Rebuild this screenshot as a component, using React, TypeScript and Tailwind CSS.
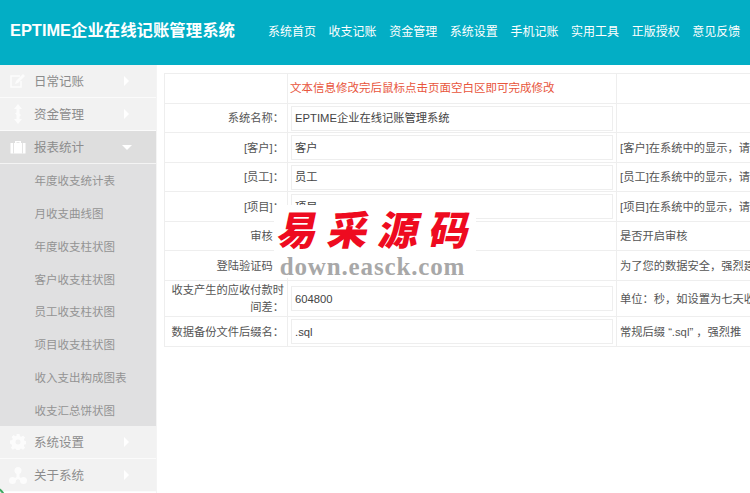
const FONT = "font-['Liberation_Sans','Noto_Sans_CJK_SC',sans-serif]";
const nav = ["系统首页", "收支记账", "资金管理", "系统设置", "手机记账", "实用工具", "正版授权", "意见反馈"];
const sub = ["年度收支统计表", "月收支曲线图", "年度收支柱状图", "客户收支柱状图", "员工收支柱状图", "项目收支柱状图", "收入支出构成图表", "收支汇总饼状图"];

function Caret() {
  return <span className="ml-auto mr-[27px] h-0 w-0 border-y-[5px] border-l-[5px] border-y-transparent border-l-white" />;
}

function PenIcon() {
  return (
    <svg width="18" height="16" viewBox="0 0 18 16" fill="none">
      <path d="M11 3H2v11h10V8" stroke="white" strokeWidth="1.6" />
      <path d="M6 11l1-3 7-7 2 2-7 7z" fill="white" />
    </svg>
  );
}
function ArrowIcon() {
  return (
    <svg width="10" height="20" viewBox="0 0 10 20" fill="white">
      <path d="M5 0l4 5H6.500v4.500L8 11l-1.500 1.500V15H9l-4 5-4-5h2.500V11L2 9.500l1.500-1V5H1z" />
    </svg>
  );
}
function CaseIcon() {
  return (
    <svg width="16" height="14" viewBox="0 0 16 14" fill="white">
      <path d="M5 3V1h6v2h4.500v10.500H.5V3zm1.500 0h3V2.200h-3z" fillRule="evenodd" />
      <path d="M3 3h1v10.500H3zM12 3h1v10.500h-1z" fill="#e4e4e4" />
    </svg>
  );
}
function GearIcon() {
  return (
    <svg width="16" height="16" viewBox="0 0 16 16" fill="white">
      <path
        fillRule="evenodd"
        d="M6.500 0h3l.4 2.200 1.300.6 1.900-1.300 2 2-1.300 1.900.6 1.300 2.200.4v3l-2.200.4-.6 1.300 1.300 1.900-2 2-1.900-1.300-1.300.6-.4 2.200h-3l-.4-2.200-1.300-.6-1.900 1.300-2-2 1.300-1.900-.6-1.300L0 9.500v-3l2.200-.4.6-1.300L1.500 2.900l2-2 1.900 1.300 1.300-.6zM8 5.500a2.500 2.500 0 100 5 2.500 2.500 0 000-5z"
      />
    </svg>
  );
}
function NodesIcon() {
  return (
    <svg width="18" height="17" viewBox="0 0 18 17" fill="white">
      <circle cx="9" cy="3.500" r="3.500" />
      <circle cx="3.500" cy="13.500" r="3.500" />
      <circle cx="14.500" cy="13.500" r="3.500" />
      <path d="M7.500 5h3v5l3 2-1.500 2-3-2-3 2-1.500-2 3-2z" />
    </svg>
  );
}

function MenuItem({ icon, label }: { icon: React.ReactNode; label: string }) {
  return (
    <div className="flex h-[33px] items-center border-b border-[#fbfbfb] bg-[#f2f2f2] text-[12.500px] text-[#8c8c8c]">
      <span className="flex w-[34px] justify-center pl-[1px] opacity-80">{icon}</span>
      <span className="pt-[2px]">{label}</span>
      <Caret />
    </div>
  );
}

const rows = [
  { h: "h-[29px]", label: "系统名称：", value: "EPTIME企业在线记账管理系统", note: "" },
  { h: "h-[30px]", label: "[客户]：", value: "客户", note: "[客户]在系统中的显示，请" },
  { h: "h-[29px]", label: "[员工]：", value: "员工", note: "[员工]在系统中的显示，请" },
  { h: "h-[30px]", label: "[项目]：", value: "项目", note: "[项目]在系统中的显示，请" },
  { h: "h-[29px]", label: "审核：", value: "", note: "是否开启审核" },
  { h: "h-[30px]", label: "登陆验证码：", value: "", note: "为了您的数据安全，强烈建" },
  { h: "h-[36px]", label: "收支产生的应收付款时间差：", value: "604800", note: "单位：秒，如设置为七天收" },
  { h: "h-[30px]", label: "数据备份文件后缀名：", value: ".sql", note: "常规后缀 “.sql” ，强烈推" },
];

export default function App() {
  return (
    <div className={`relative flex h-[493px] w-[750px] flex-col overflow-hidden bg-white ${FONT}`}>
      <header className="flex h-[65px] shrink-0 items-center bg-[#03aec5] text-white">
        <div className="-mt-[5px] ml-[10px] w-[258px] text-[16.400px] font-bold">EPTIME企业在线记账管理系统</div>
        <nav className="-mt-[2px] flex gap-[12.600px] whitespace-nowrap text-[12px]">
          {nav.map((n) => (
            <span key={n}>{n}</span>
          ))}
        </nav>
      </header>

      <div className="flex min-h-0 flex-1">
        <aside className="w-[157px] shrink-0 border-r border-[#f4f4f4]">
          <MenuItem icon={<PenIcon />} label="日常记账" />
          <MenuItem icon={<ArrowIcon />} label="资金管理" />
          <div className="flex h-[33px] items-center border-b border-[#f4f4f4] bg-[#dedede] text-[12.500px] text-[#8c8c8c]">
            <span className="flex w-[34px] justify-center pl-[1px]">
              <CaseIcon />
            </span>
            <span className="pt-[2px]">报表统计</span>
            <span className="ml-auto mr-[24px] h-0 w-0 border-x-[5px] border-t-[5px] border-x-transparent border-t-white" />
          </div>
          <div className="flex h-[262px] flex-col bg-[#e0e0e1] pl-[34.500px] text-[11.500px] text-[#939393]">
            {sub.map((s) => (
              <div key={s} className="flex h-[32.750px] items-center pt-[3px]">
                {s}
              </div>
            ))}
          </div>
          <MenuItem icon={<GearIcon />} label="系统设置" />
          <MenuItem icon={<NodesIcon />} label="关于系统" />
        </aside>

        <main className="min-w-0 flex-1 pl-[7px] pt-[8px]">
          <table className="w-[700px] table-fixed border-collapse border border-[#eeeeee] text-[11.250px] text-[#555555]">
            <colgroup>
              <col className="w-[123px]" />
              <col className="w-[329px]" />
              <col />
            </colgroup>
            <tbody>
              <tr className="h-[30px]">
                <td className="border border-[#eeeeee]" />
                <td className="border border-[#eeeeee] px-[2px] pt-[1px] text-[11.500px] text-[#e8553c]">文本信息修改完后鼠标点击页面空白区即可完成修改</td>
                <td className="border border-[#eeeeee]" />
              </tr>
              {rows.map((r) => (
                <tr key={r.label} className={r.h}>
                  <td className="border border-[#eeeeee] pl-[4px] pr-[3px] pt-[1px] text-right leading-[17px]">{r.label}</td>
                  <td className="border border-[#eeeeee] px-[3px]">
                    {r.value && (
                      <div className="flex h-[25px] items-center border border-[#eeeeee] px-[3px] pt-[1px] text-[#444444]">{r.value}</div>
                    )}
                  </td>
                  <td className="whitespace-nowrap border border-[#eeeeee] px-[3px] pt-[1px]">{r.note}</td>
                </tr>
              ))}
            </tbody>
          </table>
        </main>
      </div>

      {/* watermark */}
      <div className="absolute left-[274px] top-[205px] flex h-[73px] w-[202px] flex-col items-center bg-white px-[2px]">
        <div className="flex w-full -skew-x-12 justify-between pl-[3px] pr-[3px] font-['Noto_Sans_CJK_SC',sans-serif] text-[40px] font-black leading-[46px] text-[#ee0b20]">
          <span>易</span>
          <span>采</span>
          <span>源</span>
          <span>码</span>
        </div>
        <div className="-ml-[5px] mt-[4px] font-['Liberation_Serif',serif] text-[25px] font-bold leading-[24px] tracking-[0.85px] text-[#a8a8a8]">
          down.easck.com
        </div>
      </div>

      {/* corner badge */}
      <div className="absolute -left-[22px] top-[486px] h-[28px] w-[28px] rounded-full border-2 border-[#3fa860] bg-[#dff3e6]" />
    </div>
  );
}
